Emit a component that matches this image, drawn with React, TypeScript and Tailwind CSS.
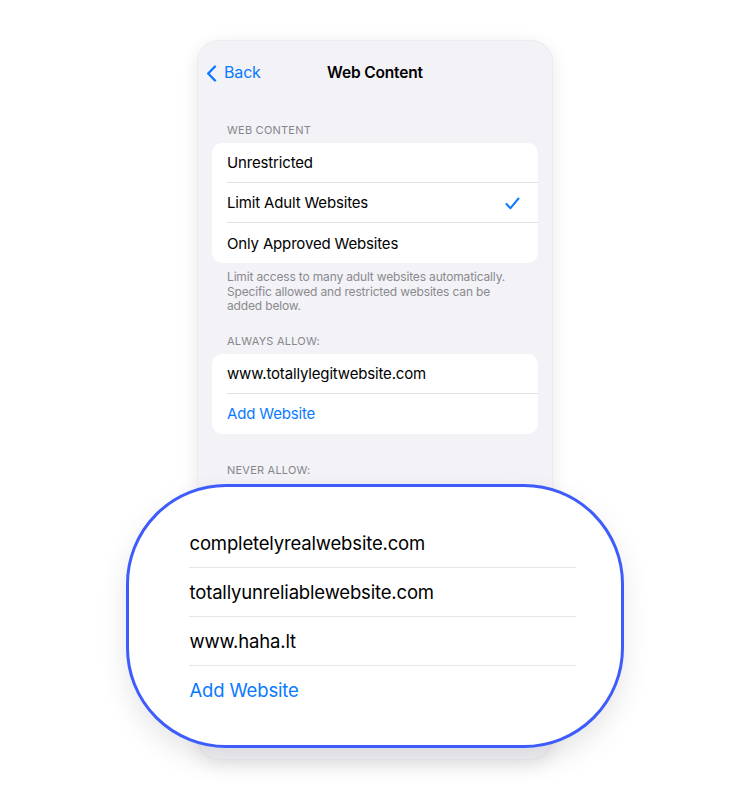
import React from "react";

const font = { fontFamily: "Inter, 'Noto Sans', sans-serif" };

function Row({ children, last, right }: { children: React.ReactNode; last?: boolean; right?: React.ReactNode }) {
  return (
    <div className="pl-[15px]">
      <div className={`h-[40px] flex items-center pr-[18px] pt-[2px] ${last ? "" : "border-b border-[#e3e3e6]"}`}>
        <div className="flex-1">{children}</div>
        {right}
      </div>
    </div>
  );
}

function BigRow({ children, last }: { children: React.ReactNode; last?: boolean }) {
  return (
    <div className="pl-[15px]">
      <div className={`h-[49px] flex items-center pl-px pt-[2px] ${last ? "" : "border-b border-[#e6e6e8]"}`}>{children}</div>
    </div>
  );
}

export default function App() {
  return (
    <div className="relative w-[750px] h-[800px] bg-white overflow-hidden text-black tracking-[-0.01em]" style={font}>
      <div className="ml-[197px] mt-[40px] w-[356px] h-[720px] rounded-[22px] bg-[#f2f2f7] shadow-[0_4px_18px_rgba(0,0,0,0.09)] border border-[#ececf0]">
        <div className="pt-[15px] h-[47px] relative flex items-center px-[8px]">
          <div className="flex items-center gap-[7px] text-[#0a7aff]">
            <svg width="11" height="17" viewBox="0 0 11 17" className="mt-[3px]">
              <path d="M9 1.5 L2.2 8.5 L9 15.5" fill="none" stroke="#0a7aff" strokeWidth="2.4" strokeLinecap="round" strokeLinejoin="round" />
            </svg>
            <span className="text-[16px]">Back</span>
          </div>
          <div className="absolute left-0 right-0 top-[16px] h-[32px] flex items-center justify-center pointer-events-none">
            <span className="text-[15.5px] font-semibold">Web Content</span>
          </div>
        </div>

        <div className="px-[14px]">
          <div className="pt-[35px] pl-[15px] text-[11px] text-[#86868b] uppercase tracking-[0.02em] leading-[14px]">Web Content</div>
          <div className="mt-[6px] bg-white rounded-[10px] text-[15px]">
            <Row>Unrestricted</Row>
            <Row
              right={
                <svg width="15" height="13" viewBox="0 0 15 13">
                  <path d="M1.5 7 L5.5 11.2 L13.5 1.5" fill="none" stroke="#0a7aff" strokeWidth="2" strokeLinecap="round" strokeLinejoin="round" />
                </svg>
              }
            >
              Limit Adult Websites
            </Row>
            <Row last>Only Approved Websites</Row>
          </div>
          <div className="pt-[7px] pl-[15px] pr-[20px] text-[12px] leading-[14.5px] text-[#8a8a8e]">
            Limit access to many adult websites automatically. Specific allowed and restricted websites can be added below.
          </div>
          <div className="pt-[20px] pl-[15px] text-[11px] text-[#86868b] uppercase tracking-[0.02em] leading-[14px]">Always Allow:</div>
          <div className="mt-[6px] bg-white rounded-[10px] text-[15px]">
            <Row>www.totallylegitwebsite.com</Row>
            <Row last>
              <span className="text-[#0a7aff]">Add Website</span>
            </Row>
          </div>
          <div className="pt-[29px] pl-[15px] text-[11px] text-[#86868b] uppercase tracking-[0.02em] leading-[14px]">Never Allow:</div>
        </div>
      </div>

      <div className="absolute left-[126px] top-[484px] w-[498px] h-[264px] rounded-[100px] border-[3.5px] border-[#3d5cfb] bg-white shadow-[0_12px_28px_rgba(0,0,0,0.10)]">
        <div className="mt-[31.5px] ml-[44.5px] w-[402px] bg-white rounded-[8px] text-[18.5px]">
          <BigRow>completelyrealwebsite.com</BigRow>
          <BigRow>totallyunreliablewebsite.com</BigRow>
          <BigRow>www.haha.lt</BigRow>
          <BigRow last>
            <span className="text-[#0a7aff]">Add Website</span>
          </BigRow>
        </div>
      </div>
    </div>
  );
}
